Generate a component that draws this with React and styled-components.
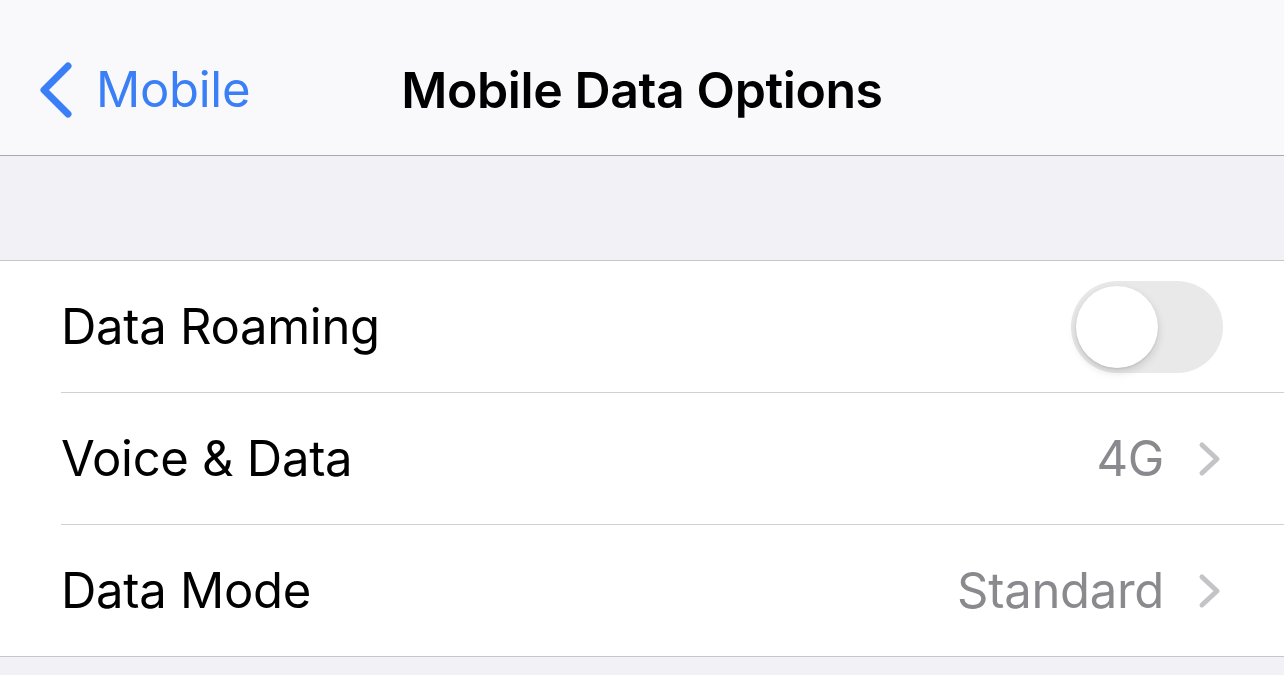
import React from "react"
import styled, { createGlobalStyle } from "styled-components"

const GlobalStyle = createGlobalStyle`
  html, body {
    margin: 0;
    padding: 0;
    background: #f2f1f6;
    font-family: Inter, "Noto Sans", sans-serif;
    -webkit-font-smoothing: antialiased;
  }
`

const Page = styled.div`
  width: 1284px;
  height: 675px;
  overflow: hidden;
  background: #f2f1f6;
`

const NavBar = styled.div`
  height: 156px;
  background: #f9f9fb;
  border-bottom: 1px solid #a9a9ae;
  display: grid;
  grid-template-columns: 1fr auto 1fr;
  align-items: center;
  padding-top: 24px;
  box-sizing: border-box;
`

const BackButton = styled.div`
  display: flex;
  align-items: center;
  gap: 22px;
  padding-left: 38px;
  color: #3b7ff6;
  font-size: 49px;
  letter-spacing: -0.3px;
`

const Title = styled.div`
  font-size: 50px;
  font-weight: 600;
  color: #000;
  letter-spacing: -0.4px;
`

const Spacer = styled.div`
  height: 104px;
`

const Group = styled.div`
  background: #fff;
  border-top: 1px solid #c6c6c8;
  border-bottom: 1px solid #c6c6c8;
`

const Row = styled.div`
  height: 131px;
  display: flex;
  align-items: center;
  margin-left: 61px;
  padding-right: 62px;
  border-bottom: ${p => (p.last ? "none" : "1px solid #d1d1d4")};
`

const Label = styled.div`
  flex: 1;
  font-size: 49px;
  color: #000;
  letter-spacing: -0.3px;
`

const Detail = styled.div`
  font-size: 49px;
  color: #8a8a8e;
  letter-spacing: -0.3px;
  margin-right: 34px;
`

const Track = styled.div`
  width: 152px;
  height: 92px;
  border-radius: 46px;
  background: #e9e9ea;
  display: flex;
  align-items: center;
  padding-left: 5px;
  box-sizing: border-box;
  margin-right: -1px;
`

const Knob = styled.div`
  width: 82px;
  height: 82px;
  border-radius: 50%;
  background: #fff;
  box-shadow: 0 4px 10px rgba(0, 0, 0, 0.14), 0 1px 2px rgba(0, 0, 0, 0.1);
`

const BackChevron = () => (
  <svg width="36" height="58" viewBox="0 0 36 58">
    <path
      d="M30 5 L6 29 L30 53"
      fill="none"
      stroke="#3b7ff6"
      strokeWidth="7"
      strokeLinecap="round"
      strokeLinejoin="round"
    />
  </svg>
)

const Chevron = () => (
  <svg width="24" height="36" viewBox="0 0 24 36">
    <path
      d="M4 4 L19 18 L4 32"
      fill="none"
      stroke="#c4c4c7"
      strokeWidth="5"
      strokeLinecap="round"
      strokeLinejoin="round"
    />
  </svg>
)

export default function App() {
  return (
    <Page>
      <GlobalStyle />
      <NavBar>
        <BackButton>
          <BackChevron />
          Mobile
        </BackButton>
        <Title>Mobile Data Options</Title>
        <div />
      </NavBar>
      <Spacer />
      <Group>
        <Row>
          <Label>Data Roaming</Label>
          <Track>
            <Knob />
          </Track>
        </Row>
        <Row>
          <Label>Voice &amp; Data</Label>
          <Detail>4G</Detail>
          <Chevron />
        </Row>
        <Row last>
          <Label>Data Mode</Label>
          <Detail>Standard</Detail>
          <Chevron />
        </Row>
      </Group>
    </Page>
  )
}
